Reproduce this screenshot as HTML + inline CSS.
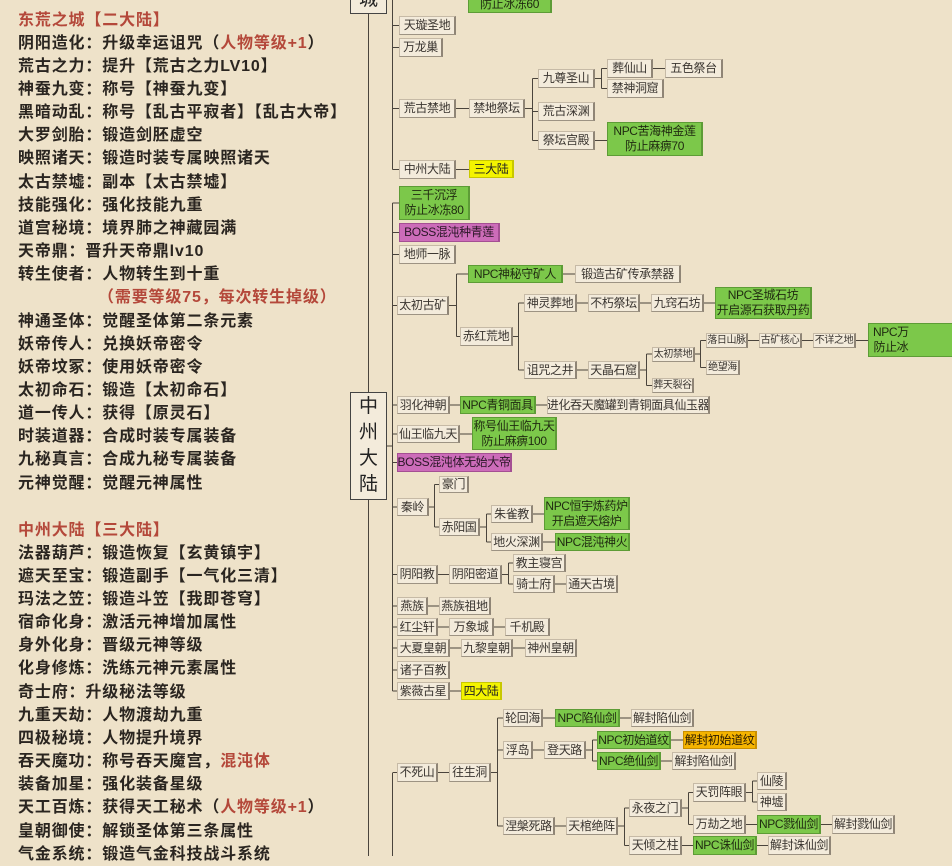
<!DOCTYPE html>
<html><head><meta charset="utf-8"><style>
*{margin:0;padding:0;box-sizing:border-box}
body{width:952px;height:856px;overflow:hidden;background:#eee2c9;position:relative;font-family:"Liberation Sans","Noto Sans CJK SC",sans-serif}
.L{position:absolute;left:18px;font-size:16px;font-weight:bold;color:#2a2520;letter-spacing:0.85px;line-height:23.15px;white-space:nowrap}
.r{color:#b4483a}
.b{position:absolute;display:flex;align-items:center;justify-content:center;text-align:center;font-size:12px;letter-spacing:-0.4px;line-height:15px;color:#3a3530;background:#f3ebdb;border:1px solid #c6baa6;border-right:2px solid #8f8576;border-bottom:1px solid #9d9383;white-space:nowrap;overflow:hidden}
.g{background:#7cc84a;border-color:#5d9c36;color:#1f2a10}
.p{background:#cc6cb9;border-color:#a44f93;color:#2a1626}
.y{background:#f4f400;border-color:#c8c800;color:#222}
.o{background:#f5b400;border-color:#c98f00;color:#2a1a00}
.s{font-size:10px}
.root{position:absolute;background:#f3ebdb;border:1px solid #444;font-size:19px;color:#222;display:flex;align-items:center;justify-content:center;text-align:center;line-height:26px}
svg{position:absolute;left:0;top:0}
</style></head><body>
<svg width="952" height="856"><g fill="none" stroke="#4a443c" stroke-width="1">
<path d="M368.5 14V392M368.5 500V856"/>
<path d="M392.5 0V169.5M392.5 203V691M386 446H392.5M392.5 773V856"/>
<path d="M392.5 25.5H399M392.5 47.5H399M392.5 108.5H399M392.5 169.5H399"/>
<path d="M392.5 203H399M392.5 232.5H399M392.5 254.5H399M392.5 305.5H397M392.5 405H397M392.5 434H397M392.5 462.5H397M392.5 507H397M392.5 574.5H397M392.5 606H397M392.5 627H397M392.5 648H397M392.5 670H397M392.5 691H397M392.5 772.5H397"/>
<path d="M456 108.5H469M525 108.5H532.5M532.5 78.5V140.5M532.5 78.5H538M532.5 111.5H538M532.5 140.5H538"/>
<path d="M595 78.5H601.5M601.5 68.5V88.5M601.5 68.5H607M601.5 88.5H607M653 68.5H665M595 140.5H607M456 169.5H469"/>
<path d="M449 305.5H456.5M456.5 274V336.5M456.5 274H468M456.5 336.5H460M563 274H575"/>
<path d="M513 336.5H518.5M518.5 303V370M518.5 303H524M518.5 370H524M577 303H588M640 303H651M704 303H715M577 370H588"/>
<path d="M640 370H646.5M646.5 354V385.5M646.5 354H652M646.5 385.5H652M695 354H700.5M700.5 340.5V367.5M700.5 340.5H706M700.5 367.5H706M748 340.5H759M802 340.5H813M856 340.5H868"/>
<path d="M450 405H460M536 405H547M460 434H472"/>
<path d="M429 507H434.5M434.5 484.5V527M434.5 484.5H439M434.5 527H439M480 527H486.5M486.5 514V542M486.5 514H491M486.5 542H491M533 514H544M543 542H555"/>
<path d="M438 574.5H449M502 574.5H508.5M508.5 563V584M508.5 563H513M508.5 584H513M555 584H566"/>
<path d="M428 606H439M438 627H449M494 627H505M450 648H461M513 648H525M450 691H461"/>
<path d="M438 772.5H449M491 772.5H497.5M497.5 718V826M497.5 718H503M497.5 750H503M497.5 826H503M543 718H555M620 718H631M533 750H544"/>
<path d="M586 750H592.5M592.5 740V761M592.5 740H597M592.5 761H597M671 740H683M661 761H672"/>
<path d="M555 826H566M618 826H624.5M624.5 808V845.5M624.5 808H629M624.5 845.5H629M682 808H688.5M688.5 792.5V824.5M688.5 792.5H693M688.5 824.5H693"/>
<path d="M746 792.5H752.5M752.5 781V802M752.5 781H757M752.5 802H757M746 824.5H757M821 824.5H832M682 845.5H693M757 845.5H768"/>
</g></svg>

<div class="L" style="top:8.5px">
<div class="r">东荒之城【二大陆】</div>
<div>阴阳造化：升级幸运诅咒（<span class="r">人物等级+1</span>）</div>
<div>荒古之力：提升【荒古之力LV10】</div>
<div>神蚕九变：称号【神蚕九变】</div>
<div>黑暗动乱：称号【乱古平寂者】【乱古大帝】</div>
<div>大罗剑胎：锻造剑胚虚空</div>
<div>映照诸天：锻造时装专属映照诸天</div>
<div>太古禁墟：副本【太古禁墟】</div>
<div>技能强化：强化技能九重</div>
<div>道宫秘境：境界肺之神藏园满</div>
<div>天帝鼎：晋升天帝鼎lv10</div>
<div>转生使者：人物转生到十重</div>
<div class="r" style="padding-left:80px">（需要等级75，每次转生掉级）</div>
<div>神通圣体：觉醒圣体第二条元素</div>
<div>妖帝传人：兑换妖帝密令</div>
<div>妖帝坟冢：使用妖帝密令</div>
<div>太初命石：锻造【太初命石】</div>
<div>道一传人：获得【原灵石】</div>
<div>时装道器：合成时装专属装备</div>
<div>九秘真言：合成九秘专属装备</div>
<div>元神觉醒：觉醒元神属性</div>
</div>
<div class="L" style="top:518.5px">
<div class="r">中州大陆【三大陆】</div>
<div>法器葫芦：锻造恢复【玄黄镇宇】</div>
<div>遮天至宝：锻造副手【一气化三清】</div>
<div>玛法之笠：锻造斗笠【我即苍穹】</div>
<div>宿命化身：激活元神增加属性</div>
<div>身外化身：晋级元神等级</div>
<div>化身修炼：洗练元神元素属性</div>
<div>奇士府：升级秘法等级</div>
<div>九重天劫：人物渡劫九重</div>
<div>四极秘境：人物提升境界</div>
<div>吞天魔功：称号吞天魔宫，<span class="r">混沌体</span></div>
<div>装备加星：强化装备星级</div>
<div>天工百炼：获得天工秘术（<span class="r">人物等级+1</span>）</div>
<div>皇朝御使：解锁圣体第三条属性</div>
<div>气金系统：锻造气金科技战斗系统</div>
</div>

<div class="root" style="left:350px;top:-12px;width:37px;height:26px;align-items:flex-end">城</div>
<div class="root" style="left:350px;top:392px;width:37px;height:108px">中<br>州<br>大<br>陆</div>

<div class="b g" style="left:468px;top:-16px;width:84px;height:29px;align-items:flex-end">防止冰冻60</div>
<div class="b" style="left:399px;top:16px;width:57px;height:19px">天璇圣地</div>
<div class="b" style="left:399px;top:38px;width:44px;height:19px">万龙巢</div>
<div class="b" style="left:399px;top:99px;width:57px;height:19px">荒古禁地</div>
<div class="b" style="left:469px;top:99px;width:56px;height:19px">禁地祭坛</div>
<div class="b" style="left:538px;top:69px;width:57px;height:19px">九尊圣山</div>
<div class="b" style="left:538px;top:102px;width:57px;height:19px">荒古深渊</div>
<div class="b" style="left:538px;top:131px;width:57px;height:19px">祭坛宫殿</div>
<div class="b" style="left:607px;top:59px;width:46px;height:19px">葬仙山</div>
<div class="b" style="left:607px;top:79px;width:57px;height:19px">禁神洞窟</div>
<div class="b" style="left:665px;top:59px;width:58px;height:19px">五色祭台</div>
<div class="b g" style="left:607px;top:122px;width:96px;height:34px">NPC苦海神金莲<br>防止麻痹70</div>
<div class="b" style="left:399px;top:160px;width:57px;height:19px">中州大陆</div>
<div class="b y" style="left:469px;top:160px;width:45px;height:18px">三大陆</div>

<div class="b g" style="left:399px;top:186px;width:71px;height:34px">三千沉浮<br>防止冰冻80</div>
<div class="b p" style="left:399px;top:223px;width:101px;height:19px">BOSS混沌种青莲</div>
<div class="b" style="left:399px;top:245px;width:57px;height:19px">地师一脉</div>
<div class="b g" style="left:468px;top:265px;width:95px;height:18px">NPC神秘守矿人</div>
<div class="b" style="left:575px;top:265px;width:106px;height:18px">锻造古矿传承禁器</div>
<div class="b" style="left:397px;top:296px;width:52px;height:19px">太初古矿</div>
<div class="b" style="left:460px;top:327px;width:53px;height:19px">赤红荒地</div>
<div class="b" style="left:524px;top:294px;width:53px;height:18px">神灵葬地</div>
<div class="b" style="left:588px;top:294px;width:52px;height:18px">不朽祭坛</div>
<div class="b" style="left:651px;top:294px;width:53px;height:18px">九窍石坊</div>
<div class="b g" style="left:715px;top:287px;width:97px;height:32px">NPC圣城石坊<br>开启源石获取丹药</div>
<div class="b" style="left:524px;top:361px;width:53px;height:18px">诅咒之井</div>
<div class="b" style="left:588px;top:361px;width:52px;height:18px">天晶石窟</div>
<div class="b s" style="left:652px;top:347px;width:43px;height:15px">太初禁地</div>
<div class="b s" style="left:652px;top:378px;width:42px;height:15px">葬天裂谷</div>
<div class="b s" style="left:706px;top:333px;width:42px;height:15px">落日山脉</div>
<div class="b s" style="left:706px;top:360px;width:34px;height:15px">绝望海</div>
<div class="b s" style="left:759px;top:333px;width:43px;height:15px">古矿核心</div>
<div class="b s" style="left:813px;top:333px;width:43px;height:15px">不详之地</div>
<div class="b g" style="left:868px;top:323px;width:100px;height:34px;justify-content:flex-start;padding-left:4px">NPC万<br>防止冰</div>
<div class="b" style="left:397px;top:396px;width:53px;height:18px">羽化神朝</div>
<div class="b g" style="left:460px;top:396px;width:76px;height:18px">NPC青铜面具</div>
<div class="b" style="left:547px;top:396px;width:163px;height:18px">进化吞天魔罐到青铜面具仙玉器</div>
<div class="b" style="left:397px;top:425px;width:63px;height:18px">仙王临九天</div>
<div class="b g" style="left:472px;top:417px;width:85px;height:33px">称号仙王临九天<br>防止麻痹100</div>
<div class="b p" style="left:397px;top:453px;width:115px;height:19px">BOSS混沌体无始大帝</div>
<div class="b" style="left:439px;top:476px;width:30px;height:17px">豪门</div>
<div class="b" style="left:397px;top:498px;width:32px;height:18px">秦岭</div>
<div class="b" style="left:439px;top:518px;width:41px;height:18px">赤阳国</div>
<div class="b" style="left:491px;top:505px;width:42px;height:18px">朱雀教</div>
<div class="b g" style="left:544px;top:497px;width:86px;height:33px">NPC恒宇炼药炉<br>开启遮天熔炉</div>
<div class="b" style="left:491px;top:533px;width:52px;height:18px">地火深渊</div>
<div class="b g" style="left:555px;top:533px;width:75px;height:18px">NPC混沌神火</div>

<div class="b" style="left:397px;top:565px;width:41px;height:19px">阴阳教</div>
<div class="b" style="left:449px;top:565px;width:53px;height:19px">阴阳密道</div>
<div class="b" style="left:513px;top:554px;width:53px;height:18px">教主寝宫</div>
<div class="b" style="left:513px;top:575px;width:42px;height:18px">骑士府</div>
<div class="b" style="left:566px;top:575px;width:52px;height:18px">通天古境</div>
<div class="b" style="left:397px;top:597px;width:31px;height:18px">燕族</div>
<div class="b" style="left:439px;top:597px;width:52px;height:18px">燕族祖地</div>
<div class="b" style="left:397px;top:618px;width:41px;height:18px">红尘轩</div>
<div class="b" style="left:449px;top:618px;width:45px;height:18px">万象城</div>
<div class="b" style="left:505px;top:618px;width:45px;height:18px">千机殿</div>
<div class="b" style="left:397px;top:639px;width:53px;height:18px">大夏皇朝</div>
<div class="b" style="left:461px;top:639px;width:52px;height:18px">九黎皇朝</div>
<div class="b" style="left:525px;top:639px;width:52px;height:18px">神州皇朝</div>
<div class="b" style="left:397px;top:661px;width:53px;height:18px">诸子百教</div>
<div class="b" style="left:397px;top:682px;width:53px;height:18px">紫薇古星</div>
<div class="b y" style="left:461px;top:682px;width:41px;height:18px">四大陆</div>
<div class="b" style="left:503px;top:709px;width:40px;height:18px">轮回海</div>
<div class="b g" style="left:555px;top:709px;width:65px;height:18px">NPC陷仙剑</div>
<div class="b" style="left:631px;top:709px;width:63px;height:18px">解封陷仙剑</div>
<div class="b" style="left:503px;top:741px;width:30px;height:18px">浮岛</div>
<div class="b" style="left:544px;top:741px;width:42px;height:18px">登天路</div>
<div class="b g" style="left:597px;top:731px;width:74px;height:18px">NPC初始道纹</div>
<div class="b o" style="left:683px;top:731px;width:74px;height:18px">解封初始道纹</div>
<div class="b g" style="left:597px;top:752px;width:64px;height:18px">NPC绝仙剑</div>
<div class="b" style="left:672px;top:752px;width:64px;height:18px">解封陷仙剑</div>
<div class="b" style="left:397px;top:763px;width:41px;height:19px">不死山</div>
<div class="b" style="left:449px;top:763px;width:42px;height:19px">往生洞</div>
<div class="b" style="left:503px;top:817px;width:52px;height:18px">涅槃死路</div>
<div class="b" style="left:566px;top:817px;width:52px;height:18px">天棺绝阵</div>
<div class="b" style="left:629px;top:799px;width:53px;height:18px">永夜之门</div>
<div class="b" style="left:629px;top:836px;width:53px;height:19px">天倾之柱</div>
<div class="b" style="left:693px;top:783px;width:53px;height:19px">天罚阵眼</div>
<div class="b" style="left:693px;top:815px;width:53px;height:19px">万劫之地</div>
<div class="b" style="left:757px;top:772px;width:30px;height:18px">仙陵</div>
<div class="b" style="left:757px;top:793px;width:30px;height:18px">神墟</div>
<div class="b g" style="left:757px;top:815px;width:64px;height:19px">NPC戮仙剑</div>
<div class="b" style="left:832px;top:815px;width:63px;height:19px">解封戮仙剑</div>
<div class="b g" style="left:693px;top:836px;width:64px;height:19px">NPC诛仙剑</div>
<div class="b" style="left:768px;top:836px;width:63px;height:19px">解封诛仙剑</div>
</body></html>
